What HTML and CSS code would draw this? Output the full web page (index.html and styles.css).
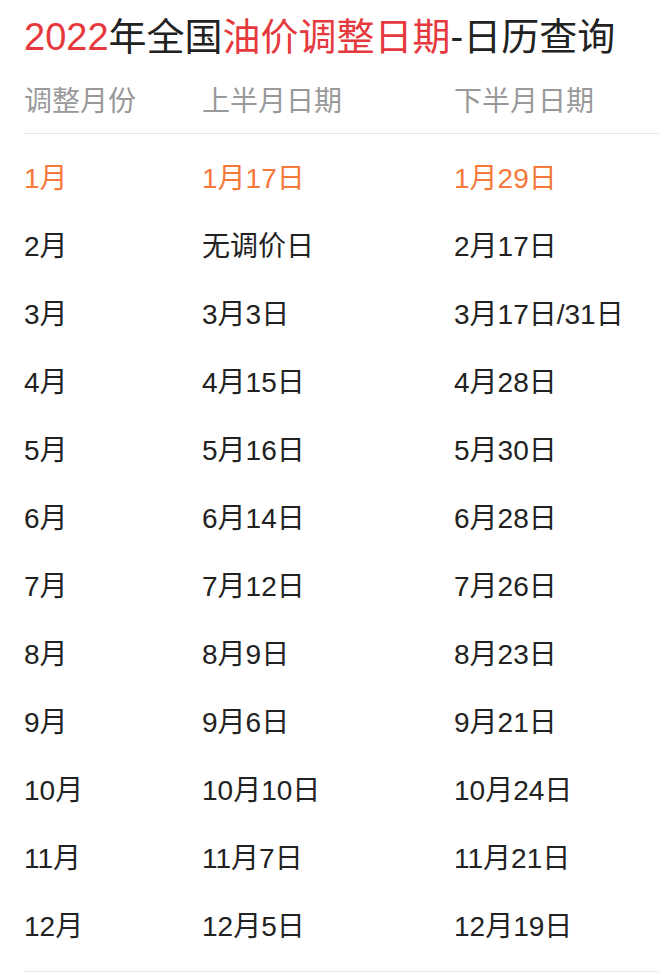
FILE: index.html
```html
<!DOCTYPE html>
<html lang="zh-CN">
<head>
<meta charset="utf-8">
<title>2022年全国油价调整日期-日历查询</title>
<link rel="stylesheet" href="styles.css">
</head>
<body>
<div class="page">
  <h1 class="title"><span class="red">2022</span>年全国<span class="red">油价调整日期</span>-日历查询</h1>
  <div class="table">
    <div class="row head">
      <div>调整月份</div><div>上半月日期</div><div>下半月日期</div>
    </div>
    <div class="body">
      <div class="row current"><div>1月</div><div>1月17日</div><div>1月29日</div></div>
      <div class="row"><div>2月</div><div>无调价日</div><div>2月17日</div></div>
      <div class="row"><div>3月</div><div>3月3日</div><div>3月17日/31日</div></div>
      <div class="row"><div>4月</div><div>4月15日</div><div>4月28日</div></div>
      <div class="row"><div>5月</div><div>5月16日</div><div>5月30日</div></div>
      <div class="row"><div>6月</div><div>6月14日</div><div>6月28日</div></div>
      <div class="row"><div>7月</div><div>7月12日</div><div>7月26日</div></div>
      <div class="row"><div>8月</div><div>8月9日</div><div>8月23日</div></div>
      <div class="row"><div>9月</div><div>9月6日</div><div>9月21日</div></div>
      <div class="row"><div>10月</div><div>10月10日</div><div>10月24日</div></div>
      <div class="row"><div>11月</div><div>11月7日</div><div>11月21日</div></div>
      <div class="row"><div>12月</div><div>12月5日</div><div>12月19日</div></div>
    </div>
  </div>
</div>
</body>
</html>
```
FILE: styles.css
```css
html, body {
  margin: 0;
  padding: 0;
  background: #fff;
}
body {
  font-family: "Liberation Sans", Arial, "Noto Sans CJK SC", sans-serif;
  color: #222;
}
.page {
  padding-left: 24px;
  overflow: hidden;
}
.title {
  margin: 0;
  padding: 11px 0 2px;
  font-size: 38px;
  line-height: 52px;
  font-weight: normal;
  color: #222;
  white-space: nowrap;
}
.red {
  color: #e5393e;
}
.table {
  border-bottom: 1px solid #e8e8e8;
}
.row {
  display: grid;
  grid-template-columns: 178px 252px 1fr;
  height: 68px;
  align-items: center;
  font-size: 28px;
  white-space: nowrap;
}
.row.head {
  color: #999;
  border-bottom: 1px solid #e8e8e8;
}
.body {
  padding: 8px 0 13px;
}
.row.current {
  color: #f5793b;
}
```
